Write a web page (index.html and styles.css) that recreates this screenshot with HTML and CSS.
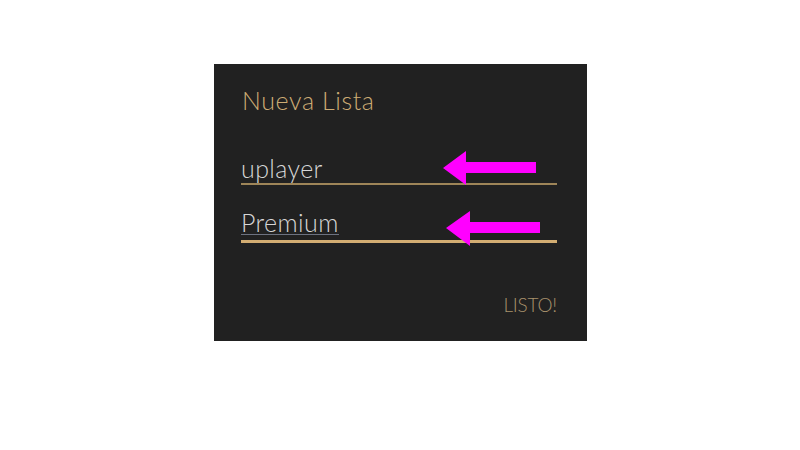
FILE: index.html
```html
<!DOCTYPE html>
<html lang="es">
<head>
<meta charset="utf-8">
<link rel="stylesheet" href="styles.css">
</head>
<body>
<div class="stage">
  <div class="dialog">
    <h1 class="title">Nueva Lista</h1>
    <div class="field field-1">
      <span class="value">uplayer</span>
      <svg class="arrow" width="94" height="34" viewBox="0 0 94 34"><polygon points="0,17 23,0 23,11 93,11 93,22 23,22 23,34" fill="#ff00ff"/></svg>
    </div>
    <div class="field field-2">
      <span class="value spell">Premium</span>
      <svg class="arrow" width="95" height="35" viewBox="0 0 95 35"><polygon points="0,17 24,0 24,11 94,11 94,22 24,22 24,35" fill="#ff00ff"/></svg>
    </div>
    <div class="actions"><span class="done">LISTO!</span></div>
  </div>
</div>
</body>
</html>
```

FILE: styles.css
```css
html, body { margin: 0; padding: 0; background: #ffffff; }
.stage { width: 800px; height: 450px; padding-top: 64px; box-sizing: border-box; }
.dialog {
  margin-left: 214px;
  width: 373px;
  height: 277px;
  background: #212121;
  box-sizing: border-box;
  padding: 21px 30px 0 27px;
  display: flex;
  flex-direction: column;
  font-family: Lato, "Open Sans", sans-serif;
  font-weight: 300;
}
.title {
  margin: 0 0 0 1px;
  font-size: 25px;
  font-weight: 300;
  color: #cdac74;
  line-height: 30px;
  letter-spacing: 0.6px;
}
.field {
  position: relative;
  height: 30px;
  display: flex;
  align-items: flex-end;
}
.field-1 { margin-top: 36px; border-bottom: 2px solid #9e8558; padding-bottom: 2px; }
.field-2 { margin-top: 20px; border-bottom: 3px solid #d3ad72; padding-bottom: 5px; }
.value {
  font-size: 25px;
  line-height: 26px;
  color: #d6d6d6;
  letter-spacing: 0.4px;
}
.spell { border-bottom: 1px solid #6d7280; line-height: 24px; }
.arrow { position: absolute; }
.field-1 .arrow { left: 202px; top: 0px; }
.field-2 .arrow { left: 205px; top: 6px; }
.actions {
  margin-top: auto;
  margin-bottom: 25px;
  display: flex;
  justify-content: flex-end;
}
.done {
  font-size: 19px;
  color: #a8916c;
  font-weight: 300;
  letter-spacing: -0.2px;
}
```
